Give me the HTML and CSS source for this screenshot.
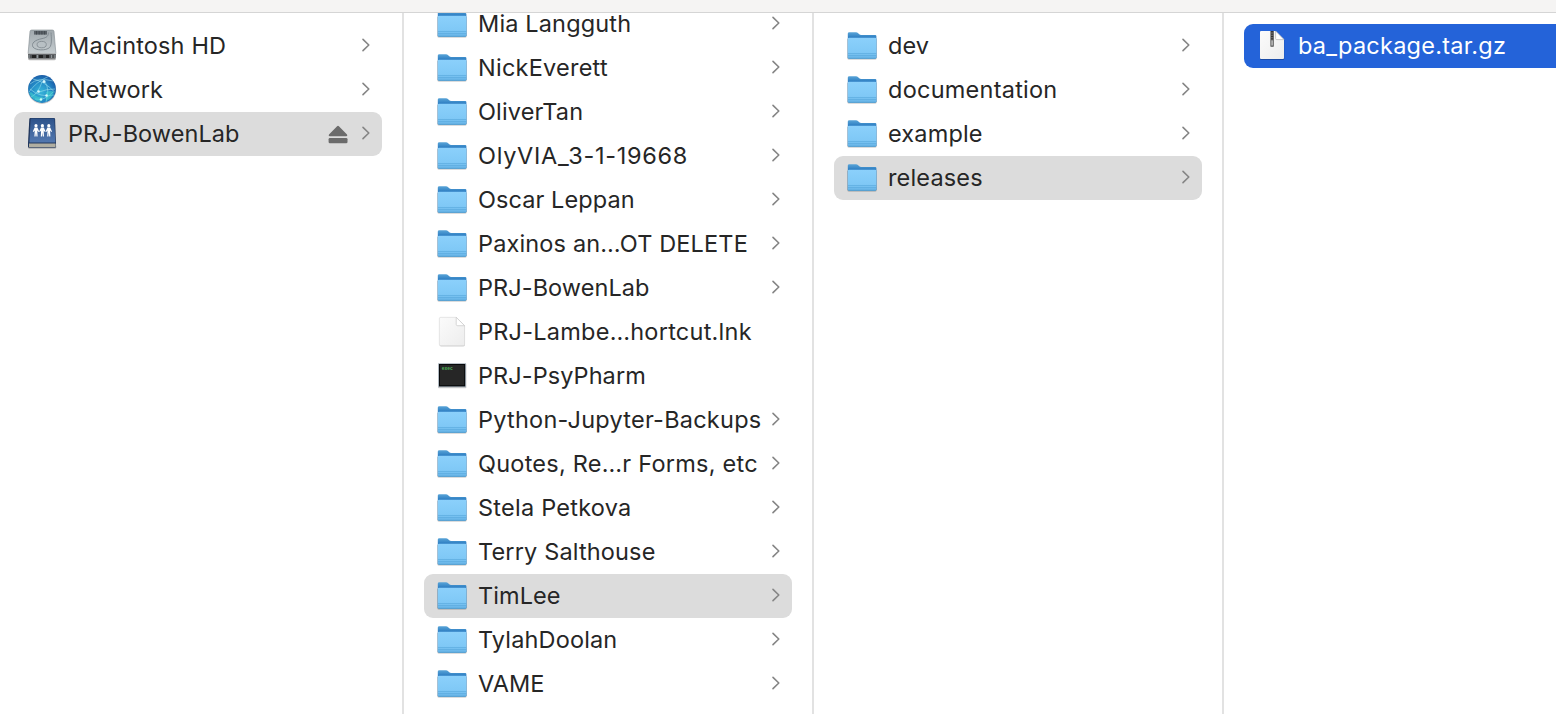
FILE: index.html
```
<!DOCTYPE html>
<html lang="en">
<head>
<meta charset="utf-8">
<title>Finder</title>
<link rel="stylesheet" href="styles.css">
</head>
<body>
<svg class="defs" width="0" height="0" aria-hidden="true">
  <defs>
    <linearGradient id="gBack" x1="0" y1="0" x2="0" y2="1"><stop offset="0" stop-color="#5aa5d8"/><stop offset=".2" stop-color="#2f7fc3"/><stop offset="1" stop-color="#2f7fc3"/></linearGradient>
    <linearGradient id="gFront" x1="0" y1="0" x2="0" y2="1"><stop offset="0" stop-color="#8bd0fb"/><stop offset=".7" stop-color="#7fc8f6"/><stop offset="1" stop-color="#64b1e4"/></linearGradient>
    <linearGradient id="gDrive" x1="0" y1="0" x2="0" y2="1"><stop offset="0" stop-color="#a0a8ad"/><stop offset="1" stop-color="#c6cdd0"/></linearGradient>
    <radialGradient id="gGlobe" cx=".45" cy=".6" r=".6"><stop offset="0" stop-color="#38b7da"/><stop offset=".6" stop-color="#2389c6"/><stop offset="1" stop-color="#1c5ea8"/></radialGradient>
    <linearGradient id="gBook" x1="0" y1="0" x2="0" y2="1"><stop offset="0" stop-color="#2d538b"/><stop offset="1" stop-color="#5378b0"/></linearGradient>
    <linearGradient id="gPaper" x1="0" y1="0" x2="1" y2="1"><stop offset="0" stop-color="#fbfbfb"/><stop offset="1" stop-color="#ededed"/></linearGradient>
    <symbol id="folder" viewBox="0 0 36 36">
      <rect x="3.3" y="10" width="29.4" height="21.6" rx="1.5" fill="#000" opacity=".28"/>
      <path d="M3.8 30V5.6Q3.8 4.2 5.4 4.2H12Q13.2 4.2 14.2 5.2L15.2 6.3Q16 7.1 17.2 7.1H31.2Q32.4 7.1 32.4 8.3V30Z" fill="url(#gBack)"/>
      <path d="M3.8 11Q3.8 9.8 5.2 9.8H31Q32.4 9.8 32.4 11V29.3Q32.4 30.7 31 30.7H5.2Q3.8 30.7 3.8 29.3Z" fill="url(#gFront)"/>
      <path d="M4 25.5H32.2M4 27.5H32.2" stroke="#57a7dc" stroke-width=".6"/>
      <path d="M4.3 30.4H31.9" stroke="#4b9bd0" stroke-width=".7"/>
    </symbol>
    <symbol id="drive" viewBox="0 0 36 36">
      <rect x="4.2" y="28" width="27.6" height="4.2" rx="1.5" fill="#000" opacity=".3"/>
      <path d="M7.6 2H28.4Q29.8 2 30 3.4L31.9 25.6H4.1L6 3.4Q6.2 2 7.6 2Z" fill="url(#gDrive)" stroke="#828a8f" stroke-width=".6"/>
      <path d="M10 3H23V6.6H10Z" fill="#5b6268"/><path d="M12.5 3.1V6.5M15.2 3.1V6.5M17.9 3.1V6.5M20.6 3.1V6.5" stroke="#40464c" stroke-width=".9"/>
      <path d="M24.4 4.5C24.4 8 23 9.6 18 10.6C10.5 12 7 15.5 9 19C11.5 22.6 22 22.9 25.6 19.5C28 16.8 27.4 10 27 4.5" fill="none" stroke="#7d878d" stroke-width=".9"/>
      <ellipse cx="17.7" cy="16.6" rx="4.6" ry="3.2" fill="#b8c0c4" stroke="#7d878d" stroke-width=".8"/>
      <path d="M4 25.3H32V29Q32 30.6 30.4 30.6H5.6Q4 30.6 4 29Z" fill="#505355"/>
      <path d="M4 25.7H32" stroke="#d9dee0" stroke-width=".8"/>
      <path d="M8 27H12V30H8ZM15 27H19V30H15ZM22 27H25V30H22Z" fill="#222"/>
      <path d="M5 27V30M31 27V30M13.4 27V30M27.5 27V30" stroke="#90979b" stroke-width="1.2"/>
    </symbol>
    <symbol id="globe" viewBox="0 0 36 36">
      <circle cx="18" cy="17.8" r="14.1" fill="#000" opacity=".2"/>
      <circle cx="18" cy="17" r="13.9" fill="url(#gGlobe)"/>
      <path d="M6 12Q14 5 29 9M9 7Q20 9 30.6 20M5 20Q12 10 24 4.6M18 10Q14 22 7 25M21 10Q26 17 22 30M6 17Q16 26 30 23M15 20Q22 17 31 17M11 27Q21 29 29 20" fill="none" stroke="#a5e8f2" stroke-width=".8" opacity=".65"/>
      <path d="M7 20Q13 26 17 25T16 30Q9 29 5 21ZM22 20Q28 18 30 20Q28 27 22 29Z" fill="#43d7cf" opacity=".55"/>
      <circle cx="20" cy="9.5" r="1.5" fill="#d5f7fd"/><circle cx="14.5" cy="19.5" r="1.3" fill="#d5f7fd"/><circle cx="22.5" cy="23.5" r="1.2" fill="#d5f7fd"/><circle cx="17" cy="27.5" r="1.3" fill="#c8fff6"/>
    </symbol>
    <symbol id="book" viewBox="0 0 36 36">
      <rect x="4" y="29" width="28.2" height="3.5" rx="1" fill="#000" opacity=".3"/>
      <path d="M6.5 2H29.9Q31 2 31.1 3L32 27.4V30.8Q32 31.6 31 31.6H5Q4 31.6 4 30.6V27L5.3 3.1Q5.4 2 6.5 2Z" fill="#20365c"/>
      <path d="M7.6 2.6H29.7Q30.4 2.6 30.4 3.3L31.3 26.5H5.4L6.6 3.4Q6.7 2.6 7.6 2.6Z" fill="url(#gBook)"/>
      <path d="M5 27.6H31.5V30.9H5Z" fill="#c9c5b5"/><path d="M5 28.2H31.5M5 29.8H31.5" stroke="#918e84" stroke-width=".6"/>
      <g fill="#fff">
        <g id="person"><circle cx="12" cy="9.7" r="1.6"/><path d="M10.6 11.5H13.4L15.2 15.4L14.5 16L13.3 14.4L13.6 20.4H12.4L12 16.5L11.6 20.4H10.4L10.7 14.4L9.5 16L8.8 15.4Z"/></g>
        <use href="#person" x="6.4"/><use href="#person" x="12.8"/>
      </g>
    </symbol>
    <symbol id="paper" viewBox="0 0 36 36">
      <path d="M5.5 5Q5.5 3.6 7 3.6H22.5L31 12V31Q31 32.4 29.5 32.4H7Q5.5 32.4 5.5 31Z" fill="#000" opacity=".18"/>
      <path d="M5.3 4.7Q5.3 3.3 6.7 3.3H22.2L30.6 11.7V30.2Q30.6 31.6 29.2 31.6H6.7Q5.3 31.6 5.3 30.2Z" fill="url(#gPaper)" stroke="#dcdcdc" stroke-width=".6"/>
      <path d="M22.2 3.3V10.3Q22.2 11.7 23.6 11.7H30.6Z" fill="#fff" stroke="#c6c6c6" stroke-width=".7"/>
    </symbol>
    <symbol id="exec" viewBox="0 0 36 36">
      <rect x="4" y="5.6" width="28.4" height="24.6" rx=".8" fill="#000" opacity=".2"/>
      <rect x="4.2" y="5.3" width="27.8" height="23.9" fill="#a9b3bd"/>
      <rect x="5" y="6" width="26.2" height="22.4" fill="#07090b"/>
      <rect x="6" y="7" width="24.2" height="20.2" fill="#262626"/>
      <text x="7.8" y="11.8" class="exec-text">exec</text>
    </symbol>
    <symbol id="archive" viewBox="0 0 36 36">
      <path d="M6 4Q6 3.3 7 3.3H21.4L30.2 12V30.6Q30.2 31.8 29.2 31.8H7Q6 31.8 6 30.8Z" fill="#000" opacity=".3"/>
      <path d="M6 4Q6 3 7 3H21.4L30 11.6V30Q30 31 29 31H7Q6 31 6 30Z" fill="url(#gPaper)"/>
      <path d="M21.6 3V10.5Q21.6 11.6 22.7 11.6H30Z" fill="#fff" stroke="#b5b5b5" stroke-width=".7"/>
      <path d="M16.2 3H20V17.8Q20 19 18.8 19H17.4Q16.2 19 16.2 17.8Z" fill="#777"/>
      <path d="M18.1 3V12" stroke="#333" stroke-width="2.2" stroke-dasharray="1.4 1"/>
      <path d="M18.1 12.4V17.3" stroke="#c8c8c8" stroke-width="1.2"/>
    </symbol>
    <symbol id="chevron" viewBox="0 0 10 16"><path d="M2 2.4L7.8 8L2 13.6" fill="none" stroke="#858585" stroke-width="1.6" stroke-linecap="round" stroke-linejoin="round"/></symbol>
    <symbol id="eject" viewBox="0 0 20 20"><path d="M9.1 2.3Q10 1.3 10.9 2.3L19 10.6Q20 12.2 18.3 12.2H1.7Q0 12.2 1 10.6Z" fill="#6b6b6b"/><rect x=".6" y="14" width="18.9" height="5.2" rx="1.3" fill="#6b6b6b"/></symbol>
  </defs>
</svg>
<div class="window">
  <header class="toolbar"></header>
  <main class="columns">
    <ul class="column column-first">
      <li class="row"><svg class="icon"><use href="#drive"/></svg><span class="label">Macintosh HD</span><svg class="chevron"><use href="#chevron"/></svg></li>
      <li class="row"><svg class="icon"><use href="#globe"/></svg><span class="label snug">Network</span><svg class="chevron"><use href="#chevron"/></svg></li>
      <li class="row selected"><svg class="icon"><use href="#book"/></svg><span class="label snug">PRJ-BowenLab</span><svg class="eject"><use href="#eject"/></svg><svg class="chevron"><use href="#chevron"/></svg></li>
    </ul>
    <ul class="column column-scrolled">
      <li class="row"><svg class="icon"><use href="#folder"/></svg><span class="label">Mia Langguth</span><svg class="chevron"><use href="#chevron"/></svg></li>
      <li class="row"><svg class="icon"><use href="#folder"/></svg><span class="label loose">NickEverett</span><svg class="chevron"><use href="#chevron"/></svg></li>
      <li class="row"><svg class="icon"><use href="#folder"/></svg><span class="label">OliverTan</span><svg class="chevron"><use href="#chevron"/></svg></li>
      <li class="row"><svg class="icon"><use href="#folder"/></svg><span class="label numeric">OlyVIA_3-1-19668</span><svg class="chevron"><use href="#chevron"/></svg></li>
      <li class="row"><svg class="icon"><use href="#folder"/></svg><span class="label snug">Oscar Leppan</span><svg class="chevron"><use href="#chevron"/></svg></li>
      <li class="row"><svg class="icon"><use href="#folder"/></svg><span class="label">Paxinos an…OT DELETE</span><svg class="chevron"><use href="#chevron"/></svg></li>
      <li class="row"><svg class="icon"><use href="#folder"/></svg><span class="label snug">PRJ-BowenLab</span><svg class="chevron"><use href="#chevron"/></svg></li>
      <li class="row"><svg class="icon"><use href="#paper"/></svg><span class="label loose">PRJ-Lambe…hortcut.lnk</span></li>
      <li class="row"><svg class="icon"><use href="#exec"/></svg><span class="label snug">PRJ-PsyPharm</span></li>
      <li class="row"><svg class="icon"><use href="#folder"/></svg><span class="label loose">Python-Jupyter-Backups</span><svg class="chevron"><use href="#chevron"/></svg></li>
      <li class="row"><svg class="icon"><use href="#folder"/></svg><span class="label loose">Quotes, Re…r Forms, etc</span><svg class="chevron"><use href="#chevron"/></svg></li>
      <li class="row"><svg class="icon"><use href="#folder"/></svg><span class="label loose">Stela Petkova</span><svg class="chevron"><use href="#chevron"/></svg></li>
      <li class="row"><svg class="icon"><use href="#folder"/></svg><span class="label">Terry Salthouse</span><svg class="chevron"><use href="#chevron"/></svg></li>
      <li class="row selected"><svg class="icon"><use href="#folder"/></svg><span class="label snug">TimLee</span><svg class="chevron"><use href="#chevron"/></svg></li>
      <li class="row"><svg class="icon"><use href="#folder"/></svg><span class="label">TylahDoolan</span><svg class="chevron"><use href="#chevron"/></svg></li>
      <li class="row"><svg class="icon"><use href="#folder"/></svg><span class="label snug">VAME</span><svg class="chevron"><use href="#chevron"/></svg></li>
    </ul>
    <ul class="column">
      <li class="row"><svg class="icon"><use href="#folder"/></svg><span class="label snug">dev</span><svg class="chevron"><use href="#chevron"/></svg></li>
      <li class="row"><svg class="icon"><use href="#folder"/></svg><span class="label loose">documentation</span><svg class="chevron"><use href="#chevron"/></svg></li>
      <li class="row"><svg class="icon"><use href="#folder"/></svg><span class="label">example</span><svg class="chevron"><use href="#chevron"/></svg></li>
      <li class="row selected"><svg class="icon"><use href="#folder"/></svg><span class="label">releases</span><svg class="chevron"><use href="#chevron"/></svg></li>
    </ul>
    <ul class="column column-last">
      <li class="row active"><svg class="icon"><use href="#archive"/></svg><span class="label loose">ba_package.tar.gz</span></li>
    </ul>
  </main>
</div>
</body>
</html>
```
FILE: styles.css
```
* { box-sizing: border-box; }
body { margin: 0; background: #fff; color: #262626; font-family: Inter, "Liberation Sans", sans-serif; font-size: 23.5px; overflow: hidden; }
.defs { display: block; width: 0; height: 0; }
.window { display: flex; flex-direction: column; width: 1556px; height: 714px; overflow: hidden; }
.toolbar { flex: none; height: 13px; background: #f5f4f3; border-bottom: 1px solid #d5d5d5; }
.columns { flex: 1; min-height: 0; display: grid; grid-template-columns: 404px 410px 410px 332px; }
.column { list-style: none; margin: 0; padding: 11px 20px 0; border-right: 2px solid #e2e2e2; overflow: hidden; min-width: 0; }
.column-first { padding-left: 14px; }
.column-scrolled > :first-child { margin-top: -22px; }
.column-last { padding-right: 0; border-right: 0; }
.row { display: flex; align-items: center; height: 44px; padding: 0 11px 0 10px; border-radius: 9px; }
.selected { background: #dcdcdc; }
.active { background: #2463d9; color: #fff; border-radius: 9px 0 0 9px; }
.icon { flex: none; width: 36px; height: 36px; margin-right: 8px; }
.label { flex: 1; min-width: 0; line-height: 44px; white-space: nowrap; letter-spacing: .15px; }
.label.snug { letter-spacing: .07px; }
.label.loose { letter-spacing: .24px; }
.label.numeric { letter-spacing: .7px; }
.chevron { flex: none; width: 10px; height: 16px; margin-bottom: 2px; }
.eject { flex: none; width: 20px; height: 20px; margin-right: 13px; }
.exec-text { font: bold 4.6px "Liberation Mono", monospace; fill: #4fb45a; }
```
